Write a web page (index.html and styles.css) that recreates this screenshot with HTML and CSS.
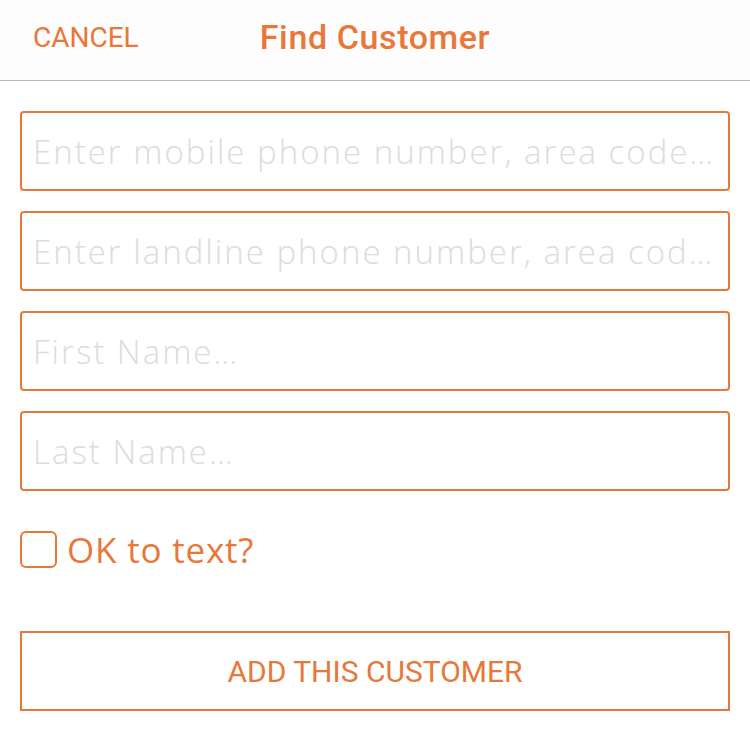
FILE: index.html
```html
<!DOCTYPE html>
<html>
<head>
<meta charset="utf-8">
<link rel="stylesheet" href="styles.css">
</head>
<body>
<header class="topbar">
  <button class="cancel">CANCEL</button>
  <h1 class="title">Find Customer</h1>
  <span class="spacer"></span>
</header>
<main class="form">
  <input class="field" type="text" placeholder="Enter mobile phone number, area code first">
  <input class="field" type="text" placeholder="Enter landline phone number, area code first">
  <input class="field" type="text" placeholder="First Name…">
  <input class="field" type="text" placeholder="Last Name…">
  <label class="check">
    <span class="box"></span>
    <span class="check-label">OK to text?</span>
  </label>
  <button class="add">ADD THIS CUSTOMER</button>
</main>
</body>
</html>
```
FILE: styles.css
```css
* { box-sizing: border-box; }
html, body { margin: 0; padding: 0; background: #ffffff; }
body { width: 750px; height: 754px; overflow: hidden; }

.topbar {
  height: 81px;
  border-bottom: 1px solid #b8b8b8;
  display: grid;
  grid-template-columns: 1fr auto 1fr;
  align-items: center;
  padding: 0 0 6px 0;
  background: #fdfdfd;
}
.cancel {
  justify-self: start;
  margin-left: 33px;
  border: none;
  background: none;
  padding: 0;
  font-family: Roboto, "Liberation Sans", sans-serif;
  font-weight: 400;
  font-size: 28px;
  letter-spacing: 0;
  color: #e8773a;
}
.title {
  margin: 0;
  font-family: Roboto, "Liberation Sans", sans-serif;
  font-weight: 500;
  font-size: 34px;
  letter-spacing: 0.6px;
  color: #e8773a;
}

.form {
  padding: 30px 20px 0 20px;
  display: flex;
  flex-direction: column;
}
.field {
  height: 80px;
  width: 100%;
  border: 2px solid #e8773a;
  border-radius: 4px;
  padding: 0 12px 0 11px;
  margin-bottom: 20px;
  font-family: "Open Sans", sans-serif;
  font-weight: 300;
  font-size: 33px;
  letter-spacing: 2px;
  color: #333;
  text-overflow: ellipsis;
  outline: none;
}
.field::placeholder { color: #dcdcdc; }

.check {
  margin-top: 20px;
  height: 37px;
  display: flex;
  align-items: center;
  gap: 10px;
  line-height: 1;
}
.box {
  width: 37px;
  height: 37px;
  border: 2px solid #e8773a;
  border-radius: 6px;
}
.check-label {
  font-family: "Open Sans", sans-serif;
  font-weight: 400;
  font-size: 35px;
  letter-spacing: 0.8px;
  color: #e8773a;
}

.add {
  margin-top: 63px;
  height: 80px;
  width: 100%;
  border: 2px solid #e8773a;
  background: #fff;
  font-family: Roboto, "Liberation Sans", sans-serif;
  font-weight: 400;
  font-size: 30px;
  letter-spacing: 0;
  color: #e8773a;
}
```
